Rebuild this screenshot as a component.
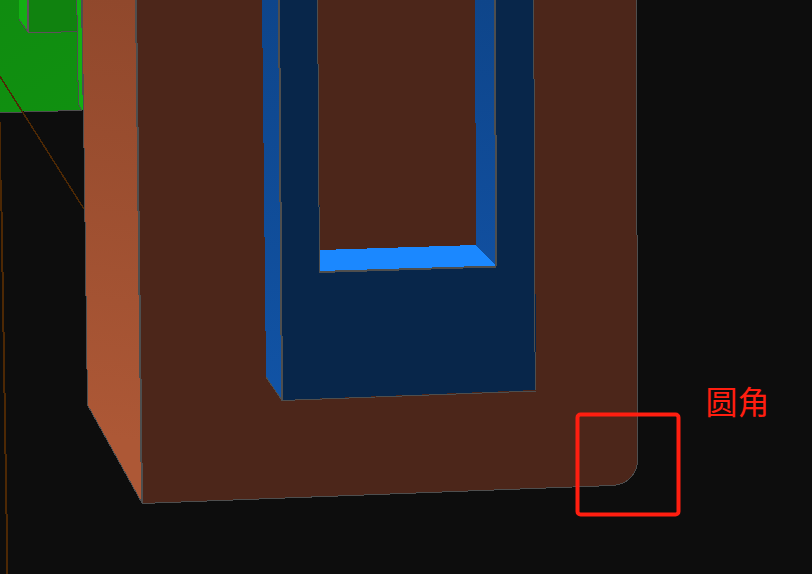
function Model() {
  return (
    <svg
      viewBox="0 0 812 574"
      className="block h-auto w-full"
      shapeRendering="crispEdges"
      role="img"
      aria-label="3D 模型"
    >
      <defs>
        <linearGradient id="side" gradientUnits="userSpaceOnUse" x1="125" y1="0" x2="60" y2="430">
          <stop offset="0" stopColor="#90482c" />
          <stop offset="1" stopColor="#ad5836" />
        </linearGradient>
        <linearGradient id="wall" gradientUnits="userSpaceOnUse" x1="280" y1="0" x2="260" y2="390">
          <stop offset="0" stopColor="#0e458a" />
          <stop offset="1" stopColor="#1153a5" />
        </linearGradient>
        <linearGradient id="inner" gradientUnits="userSpaceOnUse" x1="495" y1="0" x2="475" y2="260">
          <stop offset="0" stopColor="#0e458a" />
          <stop offset="1" stopColor="#114f9f" />
        </linearGradient>
        <linearGradient id="green" gradientUnits="userSpaceOnUse" x1="0" y1="0" x2="70" y2="110">
          <stop offset="0" stopColor="#108c10" />
          <stop offset="1" stopColor="#109010" />
        </linearGradient>
      </defs>

      {/* green block behind */}
      <path d="M0 0H77L79 105L82 110L0 112Z" fill="url(#green)" />
      <path d="M28 0H77V32H28Z" fill="#10820f" />
      <path d="M19 0H28V32L19 19Z" fill="#13b013" />
      <path d="M77 0H84V112L79 106Z" fill="#13b013" />
      <g fill="none" stroke="#4e4e4e">
        <path d="M19 19.5L28 32M61 31.5H77M0 112.5H24M24 111.5H58M58 110.5H82" />
        <path d="M76.5 0V15M77.5 15V82M78.5 82V105M79 105L82 111" />
        <path d="M81.5 0V28M82.5 28V95" />
      </g>
      <g fill="none" stroke="#60505c">
        <path d="M28 0V32" strokeWidth="2" />
        <path d="M28 32.5H61" />
      </g>

      {/* construction lines */}
      <g fill="none" stroke="#4d2804">
        <path d="M0 76.5L84 209" strokeWidth="1.5" />
        <path d="M0.5 122V180" />
        <path d="M1 180L7.5 574" strokeWidth="2" />
      </g>

      {/* brown block */}
      <path d="M82 0H136L142 503L88 405Z" fill="url(#side)" />
      <path d="M136 0H637V460C637 474 627 485 612 485L142 503Z" fill="#4c261a" />
      <g fill="none" stroke="#4e4e4e">
        <path d="M82 0L87.5 405L142 503" />
        <path d="M136 0L142 503" strokeWidth="2" />
        <path d="M142 503.5L612 485.5C627 485 637.5 474 637.5 460L636.5 0" />
      </g>

      {/* blue frame */}
      <path d="M262 0H280L282 400L266 377Z" fill="url(#wall)" />
      <path d="M279 0H534L536 390L282 400Z" fill="#08264a" />
      <path d="M318 0H496V266L320 272Z" fill="#4c261a" />
      <path d="M475 0H495L496 266L476 245Z" fill="url(#inner)" />
      <path d="M320 250L476 245L496 266L320 272Z" fill="#1b88ff" />
      <g fill="none" stroke="#4e4e4e">
        <path d="M317.5 0V64M318.5 64V207M319.5 207V272" />
        <path d="M533.5 0V79M534.5 79V352M535.5 352V390" />
        <path d="M266 377L282 400.5L536 391" />
        <path d="M279 0L282 400M495 0L496 266" strokeWidth="2" />
        <path d="M319 272L496 266.5" strokeWidth="2" />
      </g>

      {/* highlight box around the rounded corner */}
      <rect
        x="577.5"
        y="414.5"
        width="101"
        height="100"
        rx="3"
        fill="none"
        stroke="#ff1e10"
        strokeWidth="4"
        shapeRendering="auto"
      />
    </svg>
  );
}

export default function App() {
  return (
    <main className="min-h-screen overflow-hidden bg-[#0d0d0d]">
      <figure className="relative">
        <Model />
        <figcaption className="absolute top-[66%] left-[87%] -ml-px font-['Noto_Sans_CJK_SC',sans-serif] text-[32px] leading-[42px] whitespace-nowrap text-[#ff1e10]">
          圆角
        </figcaption>
      </figure>
    </main>
  );
}
